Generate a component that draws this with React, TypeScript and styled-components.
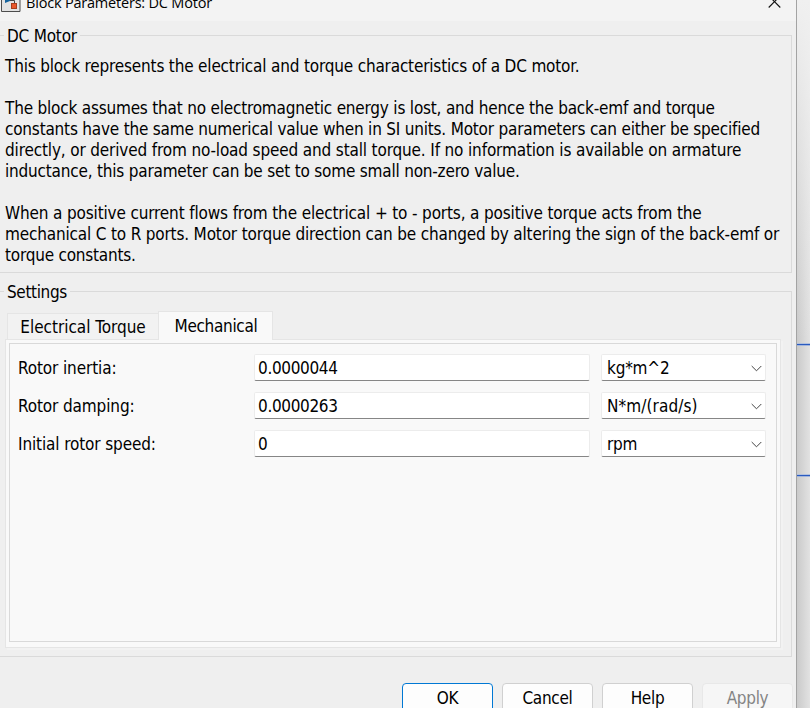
import React from 'react';
import styled, { createGlobalStyle } from 'styled-components';

const GlobalStyle = createGlobalStyle`
  * { box-sizing: border-box; }
  body {
    margin: 0;
    overflow: hidden;
    color: #000;
    font-family: 'DejaVu Sans', sans-serif;
    font-stretch: condensed;
    font-size: 17px;
    line-height: 21px;
    letter-spacing: -0.2px;
    white-space: pre;
  }
`;

const Screen = styled.div`
  display: flex;
  width: 810px;
  height: 708px;
  overflow: hidden;
`;

const Dialog = styled.div`
  width: 797px;
  height: 708px;
  border-right: 1px solid #a3a3a3;
  background: #efefef;
`;

const Canvas = styled.div`
  display: flex;
  flex-direction: column;
  flex: 1;
  padding-top: 343px;
  gap: 128px;
  background: linear-gradient(180deg, rgba(240, 240, 240, 1) 0, rgba(240, 240, 240, 0) 340px),
    linear-gradient(90deg, #cacaca, #e2e2e2);
`;

const Wire = styled.div`
  height: 3px;
  background: #2a5bc0;
  border-top: 1px solid #b3c1dc;
  border-bottom: 1px solid #a3b5da;
`;

const TitleBar = styled.header`
  display: flex;
  height: 21px;
  background: #f3f3f3;
  overflow: hidden;
`;

const AppIcon = styled.svg`
  flex: none;
  width: 21px;
  height: 13px;
`;

const Title = styled.div`
  flex: 1;
  margin: -8px 0 0 5px;
  font-family: 'Open Sans', sans-serif;
  font-stretch: normal;
  font-size: 14.5px;
  letter-spacing: -0.2px;
`;

const CloseIcon = styled.svg`
  width: 13px;
  height: 9px;
  margin-right: 15px;
`;

const Group = styled.fieldset<{ $height: number; $top: number }>`
  width: 795px;
  height: ${p => p.$height}px;
  margin: ${p => p.$top}px 0 0 -3px;
  padding: 0;
  border: 1px solid #dadada;
`;

const Legend = styled.legend<{ $spacing: number }>`
  height: 21px;
  margin-left: 6px;
  padding: 1px 3px 0;
  letter-spacing: ${p => p.$spacing}px;
`;

const Description = styled.div`
  padding: 10px 0 0 7px;
`;

const Line = styled.div<{ $spacing?: number }>`
  height: 21px;
  letter-spacing: ${p => p.$spacing ?? -0.2}px;
`;

const TabBar = styled.div`
  display: flex;
  align-items: flex-end;
  height: 28px;
  margin: 9px 0 0 9px;
`;

const Tab = styled.div<{ $active?: boolean }>`
  display: flex;
  justify-content: center;
  width: ${p => (p.$active ? 115 : 151)}px;
  height: ${p => (p.$active ? 28 : 26)}px;
  padding: ${p => (p.$active ? '4px 0 0 1px' : '3px 0 0')};
  background: ${p => (p.$active ? '#f9f9f9' : '#f2f2f2')};
  border: 1px solid #e5e5e5;
  border-right-width: ${p => (p.$active ? 1 : 0)}px;
  border-bottom: 0;
  letter-spacing: ${p => (p.$active ? -0.32 : -0.02)}px;
`;

const Pane = styled.div`
  position: relative;
  width: 776px;
  height: 309px;
  margin-left: 7px;
  padding: 3px;
  background: #f9f9f9;
  border: 1px solid #e5e5e5;
  box-shadow: 2px 2px 0 #f2f2f2;
`;

const TabSeam = styled.div`
  position: absolute;
  top: -1px;
  left: 153px;
  width: 113px;
  height: 1px;
  background: #f9f9f9;
`;

const Fields = styled.div`
  display: flex;
  flex-direction: column;
  gap: 11px;
  width: 768px;
  height: 299px;
  padding: 10px 0 0 8px;
  border: 1px solid #d9d9d9;
`;

const Row = styled.div`
  display: grid;
  grid-template-columns: 236px 336px 176px;
  height: 27px;
`;

const Label = styled.label`
  padding-top: 4px;
  letter-spacing: -0.12px;
`;

const Value = styled.div`
  display: flex;
  align-items: center;
  height: 27px;
  padding: 1px 0 0 3px;
  background: #fff;
  border: 1px solid #ececec;
  border-bottom-color: #868686;
  border-radius: 2px;
  letter-spacing: -0.35px;
`;

const Unit = styled(Value)`
  justify-content: space-between;
  margin-left: 11px;
  width: 165px;
  padding: 1px 3px 0 5px;
  letter-spacing: 0;
`;

const UnitText = styled.span<{ $spacing: number }>`
  letter-spacing: ${p => p.$spacing}px;
`;

const Chevron = styled.svg`
  width: 11px;
  height: 7px;
`;

const Buttons = styled.div`
  display: flex;
  gap: 9px;
  padding: 26px 0 0 402px;
`;

const Button = styled.div<{ $kind?: 'default' | 'disabled' }>`
  display: flex;
  justify-content: center;
  width: 91px;
  height: 32px;
  padding-top: 4px;
  border: 1px solid
    ${p => (p.$kind === 'default' ? '#0078d4' : p.$kind === 'disabled' ? '#e8e8e8' : '#d0d0d0')};
  border-radius: 4px;
  background: ${p => (p.$kind === 'disabled' ? '#f6f6f6' : '#fdfdfd')};
  color: ${p => (p.$kind === 'disabled' ? '#848484' : '#000')};
  letter-spacing: -0.3px;
`;

const description: [string, number?][] = [
  ['This block represents the electrical and torque characteristics of a DC motor.', -0.18],
  [''],
  ['The block assumes that no electromagnetic energy is lost, and hence the back-emf and torque'],
  ['constants have the same numerical value when in SI units. Motor parameters can either be specified'],
  ['directly, or derived from no-load speed and stall torque. If no information is available on armature', -0.15],
  ['inductance, this parameter can be set to some small non-zero value.'],
  [''],
  ['When a positive current flows from the electrical + to - ports, a positive torque acts from the', -0.15],
  ['mechanical C to R ports. Motor torque direction can be changed by altering the sign of the back-emf or', -0.17],
  ['torque constants.', -0.22],
];

const parameters = [
  { label: 'Rotor inertia:', value: '0.0000044', unit: 'kg*m^2', spacing: -0.2 },
  { label: 'Rotor damping:', value: '0.0000263', unit: 'N*m/(rad/s)', spacing: 0.1 },
  { label: 'Initial rotor speed:', value: '0', unit: 'rpm', spacing: -0.3 },
];

export default function App() {
  return (
    <Screen>
      <GlobalStyle />
      <Dialog>
        <TitleBar>
          <AppIcon viewBox="0 0 21 13">
            <path d="M1.500-1h18.500v12.500h-18.500z" fill="#e2e2e2" stroke="#4d4d4d" />
            <path d="M3-1h15v1H3z" fill="#fff" />
            <path d="M5-1h5v2L5 3z" fill="#15639d" />
            <path d="M10 .5h4.500V3" fill="none" stroke="#444" />
            <rect x="11.500" y="3.500" width="5" height="5" fill="#e9562a" stroke="#a83c1b" />
          </AppIcon>
          <Title>Block Parameters: DC Motor</Title>
          <CloseIcon viewBox="0 0 13 9">
            <path d="M.7-4.200 12.300 7.500M12.300-4.200.7 7.500" stroke="#111" strokeWidth="1.100" />
          </CloseIcon>
        </TitleBar>
        <Group $top={4} $height={248}>
          <Legend $spacing={-0.2}>DC Motor</Legend>
          <Description>
            {description.map(([text, spacing], i) => (
              <Line key={i} $spacing={spacing}>{text}</Line>
            ))}
          </Description>
        </Group>
        <Group $top={8} $height={376}>
          <Legend $spacing={-0.35}>Settings</Legend>
          <TabBar>
            <Tab>Electrical Torque</Tab>
            <Tab $active>Mechanical</Tab>
          </TabBar>
          <Pane>
            <TabSeam />
            <Fields>
              {parameters.map(p => (
                <Row key={p.label}>
                  <Label>{p.label}</Label>
                  <Value>{p.value}</Value>
                  <Unit>
                    <UnitText $spacing={p.spacing}>{p.unit}</UnitText>
                    <Chevron viewBox="0 0 11 7">
                      <path d="M.7 1 5.500 5.800 10.300 1" fill="none" stroke="#444" />
                    </Chevron>
                  </Unit>
                </Row>
              ))}
            </Fields>
          </Pane>
        </Group>
        <Buttons>
          <Button $kind="default">OK</Button>
          <Button>Cancel</Button>
          <Button>Help</Button>
          <Button $kind="disabled">Apply</Button>
        </Buttons>
      </Dialog>
      <Canvas>
        <Wire />
        <Wire />
      </Canvas>
    </Screen>
  );
}
